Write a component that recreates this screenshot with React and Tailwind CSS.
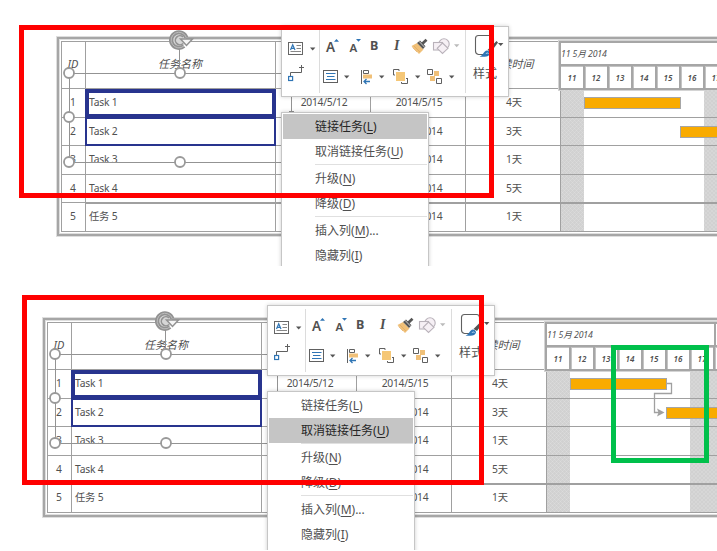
import React from "react";

const tasks = [
  { id: "1", name: "Task 1", start: "2014/5/12", end: "2014/5/15", days: "4天", h: "h-[29px]" },
  { id: "2", name: "Task 2", start: "", end: "5/16/2014", days: "3天", h: "h-[28px]" },
  { id: "3", name: "Task 3", start: "", end: "5/12/2014", days: "1天", h: "h-[29px]" },
  { id: "4", name: "Task 4", start: "", end: "5/12/2014", days: "5天", h: "h-[28px]", thick: true },
  { id: "5", name: "任务 5", start: "", end: "5/12/2014", days: "1天", h: "h-[29px]" },
];

const menuItems = [
  { label: "链接任务", key: "L" },
  { label: "取消链接任务", key: "U", sep: true },
  { label: "升级", key: "N" },
  { label: "降级", key: "D", sep: true },
  { label: "插入列", key: "M", more: "..." },
  { label: "隐藏列", key: "I" },
];

const tableGrid = "grid grid-cols-[24px_190px_95px_95px_94px]";

function HeaderRow() {
  const cell = "border-r border-[#a0a0a0]";
  return (
    <div className={`${tableGrid} h-[48px] border-t border-b border-[#a0a0a0] text-[11px] italic leading-[44px] text-center`}>
      <div className={`${cell} pr-px`}>ID</div>
      <div className={`${cell} pr-px`}>任务名称</div>
      <div className={cell}></div>
      <div className={cell}></div>
      <div className="pr-[3px]">持续时间</div>
    </div>
  );
}

function TaskRow({ task }) {
  const cell = "border-r border-[#a0a0a0]";
  return (
    <div className={`${tableGrid} ${task.h} border-b border-[#a0a0a0] text-[10.3px] leading-[27px] text-center`}>
      <div className={`${cell} pr-px`}>{task.id}</div>
      <div className={`${cell} relative pl-[3px] text-left tracking-[-0.2px]`}>
        {task.name}
        {task.thick && <div className="absolute left-0 -bottom-[2px] h-px w-[475px] bg-[#a0a0a0]" />}
      </div>
      <div className={`${cell} pl-[2px] tracking-[-0.25px]`}>{task.start}</div>
      <div className={`${cell} pl-[2px] tracking-[-0.25px]`}>{task.end}</div>
      <div className="pl-[2px]">{task.days}</div>
    </div>
  );
}

function Timeline() {
  const days = ["11", "12", "13", "14", "15", "16", "17", "18", "19"];
  const rows = ["h-[29px]", "h-[28px]", "h-[29px]", "h-[28px]", "h-[29px]"];
  const weekend =
    "bg-[#d1d1d1] bg-[repeating-linear-gradient(45deg,#ffffff20_0px,#ffffff20_1px,transparent_1px,transparent_2.83px),repeating-linear-gradient(-45deg,#ffffff20_0px,#ffffff20_1px,transparent_1px,transparent_2.83px)]";
  return (
    <div className="relative w-[240px] shrink-0 border-l border-[#a0a0a0]">
      <div className="-ml-[2px] h-[49px] w-[260px] border-l-2 border-t-2 border-b-2 border-[#a6a6a6] italic shadow-[0_0_0_1px_#d4d4d4]">
        <div className="flex h-[23px] border-b-2 border-[#a6a6a6] text-[8.7px] leading-[22px] tracking-[-0.1px]">
          <div className="w-[169px] shrink-0 border-r-2 border-[#a6a6a6] whitespace-nowrap">11 5月 2014</div>
          <div className="whitespace-nowrap">18 5月 2014</div>
        </div>
        <div className="flex h-[22px] text-center text-[8px] font-semibold leading-[23px] shadow-[inset_0_1px_0_#c4c4c4]">
          {days.map((d) => (
            <div key={d} className="w-6 shrink-0 border-r-2 border-[#a6a6a6] shadow-[1px_0_0_#c4c4c4]">{d}</div>
          ))}
        </div>
      </div>
      <div className="relative h-[142px]">
        <div className="flex h-full">
          <div className={`w-[23px] shrink-0 ${weekend}`} />
          <div className="w-[120px] shrink-0" />
          <div className={`w-12 shrink-0 ${weekend}`} />
        </div>
        <div className="absolute inset-x-0 -top-px">
          {rows.map((h, i) => (
            <div key={i} className={`${h} border-[#a0a0a0] border-b`}>
              {i === 3 && <div className="h-px translate-y-[28px] bg-[#a0a0a0]" />}
            </div>
          ))}
        </div>
        <div className="absolute left-[23px] top-[7px] h-3 w-[97px] border border-[#a6a6a6] bg-[#f9ab00]" />
        <div className="absolute left-[119px] top-[36px] h-3 w-[73px] border border-[#a6a6a6] bg-[#f9ab00]" />
      </div>
    </div>
  );
}

function GanttTable() {
  return (
    <div className="border border-r-0 border-[#dedede]">
      <div className="border-2 border-r-0 border-[#a6a6a6]">
        <div className="border border-r-0 border-[#dedede] p-px pr-0">
          <div className="flex">
            <div className="w-[499px] shrink-0 border-l border-[#a0a0a0]">
              <HeaderRow />
              {tasks.map((t) => (
                <TaskRow key={t.id} task={t} />
              ))}
            </div>
            <Timeline />
          </div>
        </div>
      </div>
    </div>
  );
}

/* Shape handles, rotation grip and the outline of the selected column */
function Selection() {
  return (
    <svg className="absolute left-0 top-0 overflow-visible" width="240" height="140" viewBox="56 36 240 140" fill="none">
      <path d="M69.500 73.500H291.500V162.500H69.500Z" stroke="#939393" />
      <path d="M179.500 48V73" stroke="#939393" />
      <path d="M289 111.500H294" stroke="#939393" />
      <g stroke="#999" strokeWidth="1.800" fill="#fff">
        <circle cx="69" cy="73" r="5" />
        <circle cx="180" cy="73" r="5" />
        <circle cx="69" cy="117" r="5" />
        <circle cx="69" cy="162" r="5" />
        <circle cx="180" cy="162" r="5" />
      </g>
      <circle cx="179" cy="40" r="7" fill="#d6d6d6" />
      <path d="M184 46A7.800 7.800 0 1 1 186.300 37.500" stroke="#929292" strokeWidth="4.200" />
      <path d="M184 46A7.800 7.800 0 1 1 186.300 37.500" stroke="#bdbdbd" strokeWidth="1" />
      <path d="M183 43.500A4.500 4.500 0 1 1 183 37" stroke="#929292" strokeWidth="1.600" />
      <path d="M180.500 39H192.500L186.500 45.500Z" fill="#f4f4f4" stroke="#929292" strokeWidth="1.500" />
    </svg>
  );
}

const CARETS = [[29, 21.5], [63, 49.5], [98, 49.5], [134, 49.5], [168, 49.5], [217, 17]];

function Toolbar() {
  return (
    <div className="relative h-[71px] w-[228px] border border-[#c6c6c6] bg-white text-[#505050] shadow-[0_0_4px_rgba(0,0,0,0.18)]">
      <svg className="absolute -left-px -top-px" width="228" height="71" viewBox="0 0 228 71" fill="none">
        <path d="M38.500 4V67M184.500 4V67" stroke="#dcdcdc" />
        {CARETS.map(([x, y]) => (
          <path key={x} d={`M${x} ${y}h5.400l-2.700 2.900z`} fill="#555" />
        ))}
        <path d="M173 18.300h5.400l-2.700 2.900z" fill="#bbb" />
        {/* text box */}
        <rect x="7.500" y="16.500" width="14" height="12" stroke="#666" />
        <path d="M15.500 19.500H20M15.500 22.500H20M9.500 25.500H20" stroke="#888" />
        <path d="M9.500 24L11.700 18.800L14 24M10.200 22.300H13.200" stroke="#2f75b5" strokeWidth="1.200" />
        {/* connector */}
        <path d="M9.500 50V46.500H20.500V39M18 41.500H23" stroke="#606060" />
        <rect x="7.600" y="50.500" width="4" height="4" stroke="#2f75b5" strokeWidth="1.200" />
        {/* size arrows */}
        <path d="M53 15.800L55.500 13L58 15.800ZM75 13H80L77.500 15.800Z" fill="#2f75b5" />
        {/* format painter */}
        <path d="M130.500 20L136 17L142.500 23.500L138 28Z" fill="#f0c078" />
        <path d="M133 20L139 26M131.500 21.500L136 26" stroke="#dfa960" strokeWidth=".7" />
        <path d="M136 17L139 14.500L144.500 20.200L142 23Z" fill="#555" />
        <path d="M140.500 18.500L145.500 13.800" stroke="#555" strokeWidth="2.800" />
        <path d="M138 15.300L143.400 21" stroke="#fff" strokeWidth=".7" />
        {/* shapes */}
        <g stroke="#b9b2ba" strokeWidth="1.100">
          <circle cx="163" cy="18" r="5.200" fill="#f6f0f5" />
          <rect x="152.500" y="16.500" width="9" height="7.500" fill="#f6f0f5" />
          <path d="M161.500 17L167 22.300L161.500 27.500L156.200 22.300Z" fill="#f6f0f5" />
        </g>
        {/* style */}
        <path d="M202 28.500H197.500Q194.500 28 194.500 25V12.500Q194.500 9.500 197.500 9.500H209.500Q212.500 9.500 212.500 12.500V16" stroke="#606060" strokeWidth="1.100" />
        <path d="M206.500 24L215.500 15L217 16.500L210 26Z" fill="#555" />
        <path d="M198.500 30.800C202.500 29 202.500 25 206 24.500C211 25.500 209.500 30.800 203.500 30.800Z" fill="#2f75b5" />
        <path d="M205 28C205.500 26.500 207 26.500 207.500 28" stroke="#b3d4ee" />
        {/* align text */}
        <rect x="42.500" y="44.500" width="14" height="12" stroke="#606060" />
        <path d="M45 47.500H54.500M46 50.500H53.500M45 53.500H54.500" stroke="#2f75b5" />
        {/* align shapes */}
        <path d="M80.500 44V58M82.500 44.500H87.500V47.500H82.500Z" stroke="#606060" />
        <path d="M82 48.500H91V52.500H82Z" fill="#f0c078" />
        <path d="M83 55.500H89M85.500 53L83 55.500L85.500 58" stroke="#2f75b5" strokeWidth="1.300" />
        {/* bring forward */}
        <path d="M115 46H124V55H115Z" fill="#f5c777" />
        <path d="M112.500 49V43.500H118M112.500 49H114M118 43.500V45M126.500 52V57.500H120.500V56M125 52.500H126.500" stroke="#606060" />
        {/* group */}
        <path d="M146.500 43.500H151.500V48.500H146.500ZM155.500 52.500H160.500V57.500H155.500Z" stroke="#606060" />
        <path d="M153 45H158V50H153ZM149 50H154V55H149Z" fill="#f0c078" />
      </svg>
      <span className="absolute left-[44px] top-[13px] text-[13.5px] font-semibold leading-[15px]">A</span>
      <span className="absolute left-[67.500px] top-[14px] text-[11.5px] font-semibold leading-[13px]">A</span>
      <span className="absolute left-[88px] top-[11px] text-[12.5px] font-bold leading-[16px]">B</span>
      <span className="absolute left-[112px] top-[11px] font-['Liberation_Serif',serif] text-[14px] font-bold italic leading-[16px]">I</span>
      <span className="absolute left-[191px] top-[39px] text-[12px] leading-[16px]">样式</span>
    </div>
  );
}

function ContextMenu({ active }) {
  return (
    <div className="h-[170px] w-[148px] border border-[#c6c6c6] bg-white p-px text-[12px] leading-[25px] text-[#505050] shadow-[0_0_4px_rgba(0,0,0,0.2)]">
      {menuItems.map((m, i) => (
        <React.Fragment key={m.key}>
          <div className={`h-[25px] whitespace-nowrap pl-8 ${i === active ? "bg-[#c5c5c5] text-[#262626]" : ""}`}>
            {m.label}(<span className="underline underline-offset-2">{m.key}</span>){m.more}
          </div>
          {m.sep && <div className="mb-px ml-8 h-px bg-[#e0e0e0]" />}
        </React.Fragment>
      ))}
    </div>
  );
}

/* Dependency arrow from the first bar to the second */
function DependencyLink() {
  return (
    <svg className="absolute left-[608px] top-[60px]" width="28" height="42" viewBox="650 377 28 42" fill="none">
      <path d="M667 383.500H671.500V393.500H654.500V412.500H660" stroke="#a0a0a0" strokeWidth="1.300" />
      <path d="M657 408.500L664.500 412.500L657 416.500L658.500 412.500Z" fill="#a0a0a0" />
    </svg>
  );
}

function Chart({ active, linked }) {
  return (
    <div className="relative">
      <GanttTable />
      <div className="absolute left-[29px] top-[53px] h-[30px] w-[191px] border-4 border-b-[5px] border-[#28348e]" />
      <div className="absolute left-[29px] top-[83px] h-[27px] w-[191px] border-2 border-t-0 border-[#28348e]" />
      <Selection />
      {linked && <DependencyLink />}
      <div className={`absolute left-[225px] ${linked ? "-top-[12px]" : "-top-[10px]"}`}>
        <Toolbar />
      </div>
      <div className={`absolute left-[225px] ${linked ? "top-[74px]" : "top-[76px]"}`}>
        <ContextMenu active={active} />
      </div>
    </div>
  );
}

export default function App() {
  return (
    <div className="h-[551px] w-[717px] overflow-hidden bg-white font-['Noto_Sans','Noto_Sans_CJK_SC',sans-serif] text-[#505050]">
      <section className="relative h-[266px] overflow-hidden pl-[56px] pt-[36px]">
        <Chart active={0} linked={false} />
        <div className="absolute left-[19px] top-[25px] h-[173px] w-[475px] border-5 border-[#ff0000]" />
      </section>
      <section className="relative h-[284px] overflow-hidden pl-[42px] pt-[51px]">
        <Chart active={1} linked />
        <div className="absolute left-[22px] top-[29px] h-[190px] w-[462px] border-5 border-[#ff0000]" />
        <div className="absolute left-[611px] top-[79px] h-[118px] w-[98px] border-5 border-[#00c04b]" />
      </section>
    </div>
  );
}
